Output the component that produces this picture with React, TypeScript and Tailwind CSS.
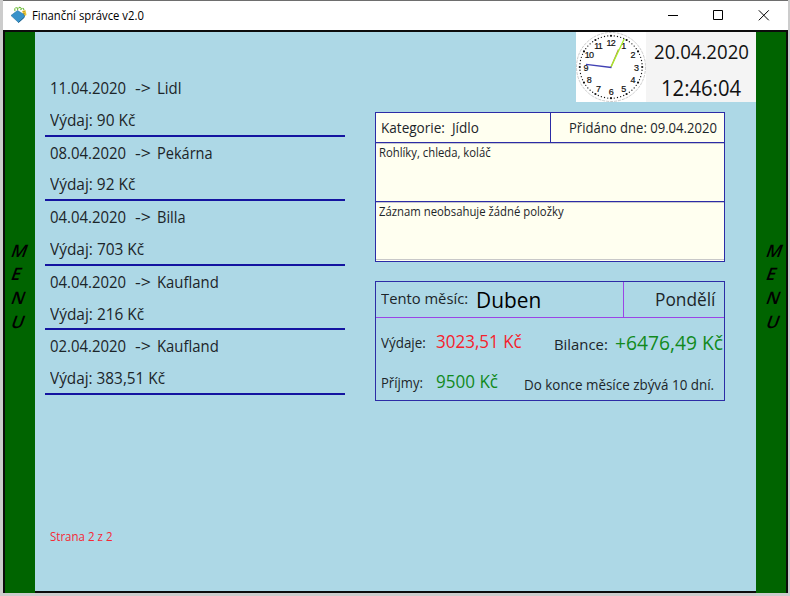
import { useLayoutEffect, useRef, useState } from "react";

type LabelProps = { w: number; className?: string; children: string };

// A single line of text condensed horizontally to a known width.
function Label({ w, className = "", children }: LabelProps) {
  const ref = useRef<HTMLSpanElement>(null);
  const [scale, setScale] = useState(1);
  useLayoutEffect(() => {
    if (ref.current) setScale(w / ref.current.offsetWidth);
  }, [w, children]);
  return (
    <span className={"block shrink-0 whitespace-pre " + className} style={{ width: w }}>
      <span ref={ref} className="inline-block origin-left" style={{ transform: `scaleX(${scale})` }}>
        {children}
      </span>
    </span>
  );
}

const records = [
  { date: "11.04.2020", shop: "Lidl", w: 25, amount: "Výdaj: 90 Kč", aw: 85 },
  { date: "08.04.2020", shop: "Pekárna", w: 56, amount: "Výdaj: 92 Kč", aw: 85 },
  { date: "04.04.2020", shop: "Billa", w: 29, amount: "Výdaj: 703 Kč", aw: 94 },
  { date: "04.04.2020", shop: "Kaufland", w: 62, amount: "Výdaj: 216 Kč", aw: 94 },
  { date: "02.04.2020", shop: "Kaufland", w: 62, amount: "Výdaj: 383,51 Kč", aw: 115 },
];

function AppIcon() {
  return (
    <svg width="18" height="18" viewBox="0 0 18 18" className="shrink-0">
      <path d="M5 5Q4 1 7.500 2M7.500 4Q8 0 11 2M10.500 4Q13 .5 14 4" fill="none" stroke="#69ba35" strokeWidth="1.1" strokeDasharray="2.500 .7" />
      <path d="M12 5l3.500-1 1 5-2.500 1.500z" fill="#edc535" />
      <path d="M14 5v5" stroke="#9c8b27" strokeDasharray="1 1" />
      <path d="M1 9.500L7.500 4.500 14 8.500 14.500 11 8.500 16.500z" fill="#3792ca" stroke="#23709f" strokeWidth=".6" />
      <path d="M8.500 16.500L14.500 11" stroke="#1b618e" />
    </svg>
  );
}

function Clock() {
  const dots = Array.from({ length: 60 }, (_, i) => (i * Math.PI) / 30);
  const numerals = Array.from({ length: 12 }, (_, i) => i + 1);
  return (
    <svg width="70" height="70" viewBox="0 0 70 70" className="shrink-0 bg-white">
      <circle cx="35" cy="35" r="34.5" fill="none" stroke="#b5b5b5" strokeWidth=".7" strokeDasharray="3 1" />
      {dots.map((a, i) => (
        <circle key={i} cx={35 + 31.2 * Math.sin(a)} cy={35 - 31.2 * Math.cos(a)} r={i % 5 ? 0.65 : 1.1} fill="#111" />
      ))}
      {numerals.map((n) => (
        <text
          key={n}
          x={34.8 + 25.3 * Math.sin((n * Math.PI) / 6)}
          y={38.5 - 24.6 * Math.cos((n * Math.PI) / 6)}
          textAnchor="middle"
          fontSize="9"
          letterSpacing="-.8"
          fill="#111"
          stroke="#111"
          strokeWidth=".2"
          className="font-['Liberation_Sans',sans-serif]"
        >
          {n}
        </text>
      ))}
      <path d="M35 35L42.5 17.5" stroke="#b5784f" strokeWidth="1.2" />
      <path d="M35 35L48.2 7" stroke="#a6ef28" strokeWidth="1.3" />
      <path d="M35.5 35.5L10 32.3" stroke="#4141b4" strokeWidth="1.3" />
    </svg>
  );
}

function Menu({ className }: { className: string }) {
  return (
    <nav className={"w-[30px] shrink-0 bg-[#006400] pt-[206.5px] text-[17px] font-semibold leading-[23.8px] text-black " + className}>
      {["M", "E", "N", "U"].map((c) => (
        <div key={c}>
          <span className="inline-block -skew-x-[20deg]">{c}</span>
        </div>
      ))}
    </nav>
  );
}

export default function App() {
  return (
    <div className="flex h-[596px] w-[790px] flex-col overflow-hidden bg-[#cccccc] pl-[3px] pr-[2px] font-['Open_Sans','Noto_Sans',sans-serif] text-[#1c2529]">
      <header className="flex h-[30px] shrink-0 items-start border-t border-[#6e6e6e] bg-white pl-[7px] text-black">
        <div className="pt-[5px]">
          <AppIcon />
        </div>
        <Label w={112} className="ml-1 text-[11.7px] leading-[28px]">Finanční správce v2.0</Label>
        <svg width="106" height="12" viewBox="0 0 106 12" className="ml-auto mr-[17px] mt-[8px]" fill="none" stroke="#000">
          <path d="M3 6.5h10M93.8 1.3l10 10M103.8 1.3l-10 10" />
          <path d="M48.5 1.5h9v9h-9z" />
        </svg>
      </header>
      <div className="flex h-[563px] shrink-0 border-x-2 border-t-2 border-[#0c0c0c]">
        <Menu className="pl-[7px]" />
        <main className="flex w-[721px] shrink-0 border-b-2 border-[#0c0c0c] bg-[#add8e6]">
          <section className="flex w-[310px] shrink-0 flex-col pl-[10px] pt-[39.9px] text-[15.6px]">
            {records.map((r, i) => (
              <div key={i} className="h-[64.63px] border-b-2 border-[#1414a0] pl-[5px]">
                <div className="flex leading-[33.8px]">
                  <Label w={76.5}>{r.date}</Label>
                  <Label w={16} className="ml-[8.5px]">{"->"}</Label>
                  <Label w={r.w} className="ml-[5.5px]">{r.shop}</Label>
                </div>
                <Label w={r.aw} className="leading-[29.4px]">{r.amount}</Label>
              </div>
            ))}
            <Label w={62} className="ml-[5px] mt-[130px] text-[11.7px] leading-[22px] text-[#f62835]">Strana 2 z 2</Label>
          </section>
          <section className="flex flex-1 flex-col">
            <div className="flex h-[70px] w-[180px] self-end bg-[#f4f4f4]">
              <Clock />
              <div className="flex w-[110px] flex-col items-center text-[#111]">
                <Label w={95} className="text-[19.6px] leading-[39px]">20.04.2020</Label>
                <Label w={80} className="mt-[1px] text-[21.5px] leading-[32px]">12:46:04</Label>
              </div>
            </div>
            <div className="ml-[30px] mt-[10px] h-[150px] w-[350px] border border-[#2c2ca6] bg-[#fffff0]">
              <div className="flex h-[30px] border-b border-[#2c2ca6] text-[13.7px] leading-[30px]">
                <div className="w-[175px] border-r border-[#2c2ca6] pl-[5px]">
                  <Label w={98}>Kategorie:  Jídlo</Label>
                </div>
                <Label w={148} className="ml-[18px]">Přidáno dne: 09.04.2020</Label>
              </div>
              <div className="h-[59px] border-b border-[#2c2ca6] pl-[3px] pt-px text-[11.7px] leading-[17px] shadow-[inset_0_1px_0_#c8c8cf]">
                <Label w={112}>Rohlíky, chleda, koláč</Label>
              </div>
              <div className="h-[58px] border-b border-[#c8c8c8] pl-[3px] pt-px text-[11.7px] leading-[17px] shadow-[inset_0_1px_0_#c8c8cf]">
                <Label w={185}>Záznam neobsahuje žádné položky</Label>
              </div>
            </div>
            <div className="ml-[30px] mt-[19px] h-[120px] w-[350px] border border-[#2c2ca6]">
              <div className="flex h-[36px] border-b border-[#9b45e6]">
                <div className="flex w-[248px] items-start border-r border-[#9b45e6] pl-[5px]">
                  <Label w={87} className="text-[14.6px] leading-[32px]">Tento měsíc:</Label>
                  <Label w={65} className="ml-[7.5px] text-[21.5px] leading-[35px] text-black">Duben</Label>
                </div>
                <Label w={60} className="ml-[30.5px] text-[17.6px] leading-[35px]">Pondělí</Label>
              </div>
              <div className="flex h-[41px] pl-[5px]">
                <Label w={45} className="text-[13.7px] leading-[50px]">Výdaje:</Label>
                <Label w={86} className="ml-[10px] text-[17.6px] leading-[47px] text-[#f5222d]">3023,51 Kč</Label>
                <Label w={54} className="ml-[31.5px] text-[14.6px] leading-[53px]">Bilance:</Label>
                <Label w={108} className="ml-[7.5px] text-[19.6px] leading-[49px] text-[#118a1d]">+6476,49 Kč</Label>
              </div>
              <div className="flex h-[41px] pl-[5px]">
                <Label w={42} className="text-[13.7px] leading-[48px]">Příjmy:</Label>
                <Label w={62} className="ml-[13px] text-[17.6px] leading-[45px] text-[#118a1d]">9500 Kč</Label>
                <Label w={190} className="ml-[26px] text-[13.7px] leading-[52px]">Do konce měsíce zbývá 10 dní.</Label>
              </div>
            </div>
          </section>
        </main>
        <Menu className="pl-[10.5px]" />
      </div>
    </div>
  );
}
